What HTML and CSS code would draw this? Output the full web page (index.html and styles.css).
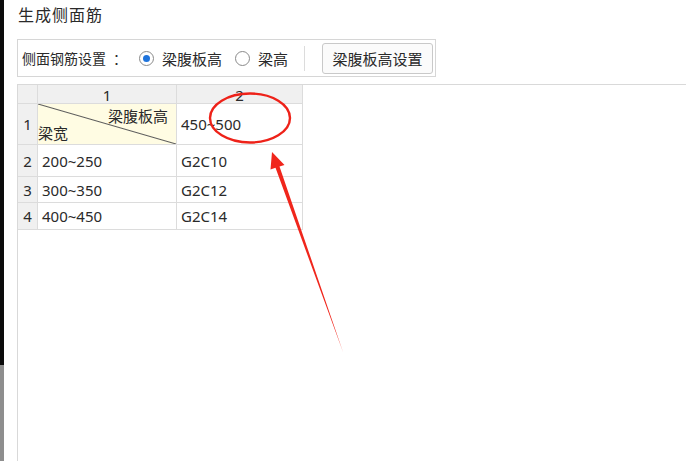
FILE: index.html
```html
<!DOCTYPE html>
<html lang="zh-CN">
<head>
    <meta charset="UTF-8">
    <title>生成侧面筋</title>
    <link rel="stylesheet" href="styles.css">
</head>
<body>
    <div class="edge"></div>
    <div class="main">
        <div class="title">生成侧面筋</div>
        <div class="group">
            <span class="label">侧面钢筋设置<span class="colon">：</span></span>
            <span class="radio on"></span>
            <span class="opt">梁腹板高</span>
            <span class="radio"></span>
            <span class="opt">梁高</span>
            <span class="sep"></span>
            <button class="btn">梁腹板高设置</button>
        </div>
        <div class="grid">
            <div class="sheet">
                <div class="corner"></div>
                <div class="colhead">1</div>
                <div class="colhead">2</div>

                <div class="rowhead">1</div>
                <div class="cell diag">
                    <span class="d-top">梁腹板高</span>
                    <span class="d-bot">梁宽</span>
                </div>
                <div class="cell">450~500</div>

                <div class="rowhead">2</div>
                <div class="cell">200~250</div>
                <div class="cell">G2C10</div>

                <div class="rowhead">3</div>
                <div class="cell">300~350</div>
                <div class="cell">G2C12</div>

                <div class="rowhead">4</div>
                <div class="cell">400~450</div>
                <div class="cell">G2C14</div>
            </div>
        </div>
    </div>

    <!-- red markup drawn over the screenshot -->
    <svg class="markup" width="686" height="461" viewBox="0 0 686 461">
        <ellipse cx="250" cy="118" rx="40" ry="24.5" fill="none" stroke="#ee2219" stroke-width="2.4"/>
        <polygon points="272,152 284.5,165 279.5,166.4 343,352 275.5,167.8 270.5,169.6" fill="#f0261c"/>
    </svg>
</body>
</html>
```

FILE: styles.css
```css
* {
    box-sizing: border-box;
    margin: 0;
    padding: 0;
}

body {
    width: 686px;
    height: 461px;
    overflow: hidden;
    display: flex;
    background-color: #fff;
    color: #2a2a2a;
    font-family: "Noto Sans", "Noto Sans CJK SC", sans-serif;
}

.edge {
    width: 4px;
    background: linear-gradient(#0b0b0b 0 365px, #8e8e8e 365px);
}

.main {
    flex: 1;
    display: flex;
    flex-direction: column;
    padding-left: 13px;
}

.title {
    height: 39px;
    padding: 4px 0 0 1px;
    font-size: 16px;
    line-height: 22px;
    letter-spacing: 1px;
}

.group {
    width: 419px;
    height: 38px;
    border: 1px solid #d6d6d6;
    display: flex;
    align-items: center;
    padding-left: 4px;
    font-family: "Noto Sans CJK SC", sans-serif;
}

.label {
    font-size: 14px;
    width: 117px;
}

.colon {
    padding-left: 7px;
}

.opt {
    font-size: 15px;
    margin-left: 8px;
}

.radio {
    width: 15px;
    height: 15px;
    border: 1px solid #8a8a8a;
    border-radius: 50%;
    background: #fff;
    display: flex;
    align-items: center;
    justify-content: center;
}

.radio.on::after {
    content: "";
    width: 7px;
    height: 7px;
    border-radius: 50%;
    background: #1f74dc;
}

.radio + .opt + .radio {
    margin-left: 13px;
}

.sep {
    width: 1px;
    height: 25px;
    background: #dcdcdc;
    margin-left: 16px;
}

.btn {
    margin-left: 17px;
    height: 31px;
    width: 111px;
    border: 1px solid #c9c9c9;
    border-radius: 3px;
    background: #fbfbfb;
    color: #2a2a2a;
    font-family: "Noto Sans CJK SC", sans-serif;
    font-size: 15px;
}

.grid {
    flex: 1;
    margin-top: 7px;
    border-top: 1px solid #d9d9d9;
    border-left: 1px solid #d9d9d9;
}

.sheet {
    display: grid;
    grid-template-columns: 20px 139px 126px;
    grid-template-rows: 19px 41px 32px 26px 27px;
    width: 285px;
}

.sheet > div {
    border-right: 1px solid #dcdcdc;
    border-bottom: 1px solid #dcdcdc;
    font-size: 15px;
    display: flex;
    align-items: center;
}

.corner,
.colhead,
.rowhead {
    background: #f0f0f0;
}

.colhead,
.rowhead {
    justify-content: center;
    font-size: 15px;
}

.rowhead {
    font-size: 16px;
}

.colhead {
    line-height: 19px;
    padding-top: 2px;
}

.cell {
    padding-left: 4px;
}

.diag {
    position: relative;
    background:
        linear-gradient(to top right, transparent calc(50% - 1px), #5a5a5a 50%, transparent calc(50% + 1px)),
        #fffce3;
    font-family: "Noto Sans CJK SC", sans-serif;
}

.d-top {
    position: absolute;
    right: 8px;
    top: 2px;
    line-height: 20px;
}

.d-bot {
    position: absolute;
    left: 0;
    bottom: 1px;
    line-height: 20px;
}

.markup {
    position: absolute;
    top: 0;
    left: 0;
    pointer-events: none;
}
```
